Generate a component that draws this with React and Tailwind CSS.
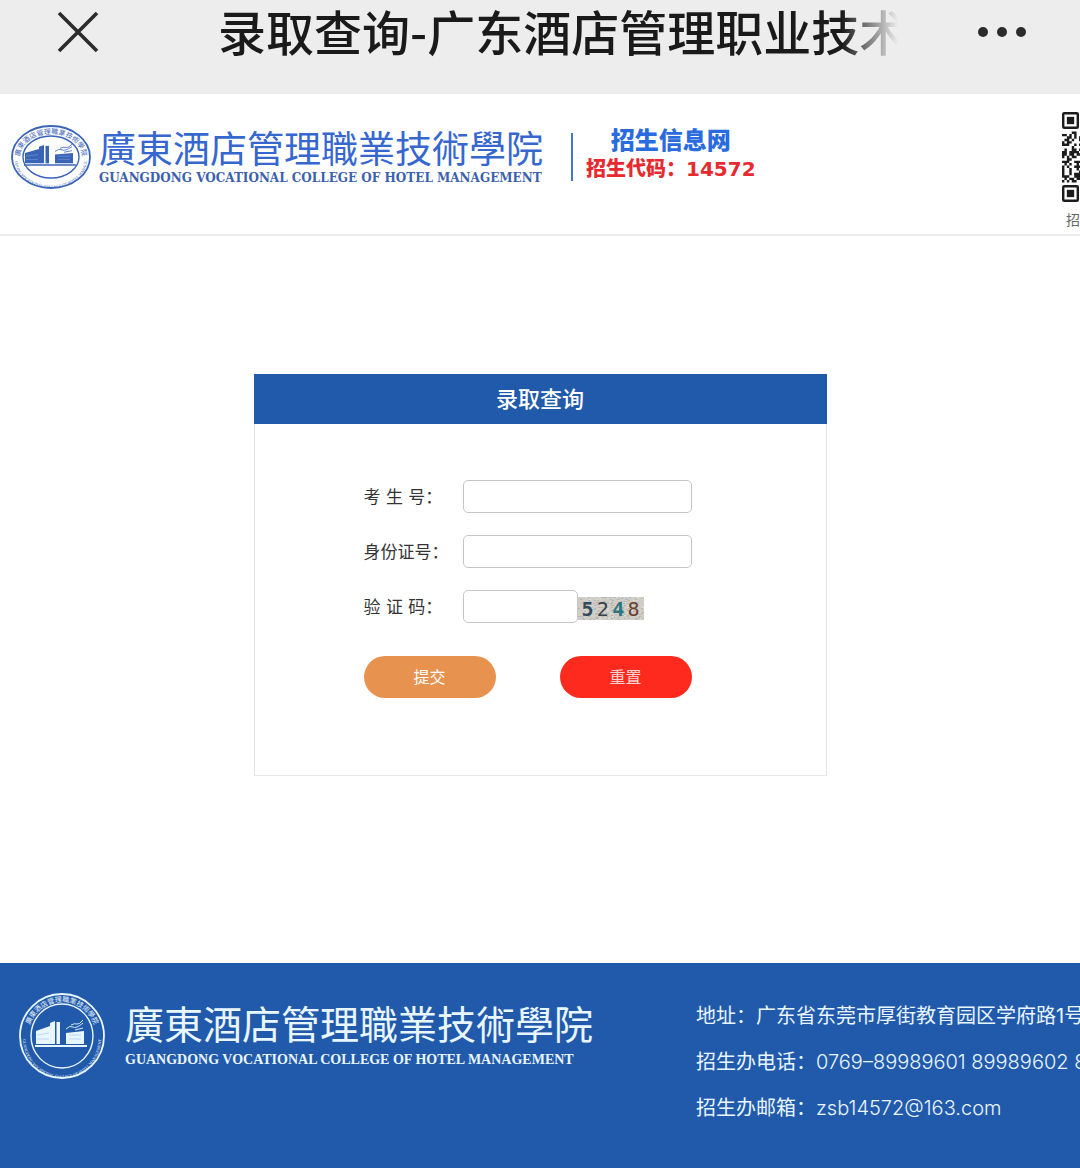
import React, { useState } from 'react';

const SCHOOL_CN = '廣東酒店管理職業技術學院';
const SCHOOL_EN = 'GUANGDONG VOCATIONAL COLLEGE OF HOTEL MANAGEMENT';

// Round school seal, drawn around its own centre
const Emblem = ({ id, rx, ry, className }) => {
  const tx = rx - 8;
  const ty = ry - 8;
  const bx = rx - 3;
  const by = ry - 3;
  return (
    <svg
      className={className}
      width={rx * 2 + 2}
      height={ry * 2 + 2}
      viewBox={`${-rx - 1} ${-ry - 1} ${rx * 2 + 2} ${ry * 2 + 2}`}
      fill="none"
      stroke="currentColor"
      aria-hidden="true"
    >
      <ellipse rx={rx} ry={ry} strokeWidth="1.8" />
      <ellipse rx={rx - 11} ry={ry - 10} strokeWidth="1.4" />
      <path id={`${id}-top`} d={`M${-tx} 0A${tx} ${ty} 0 0 1 ${tx} 0`} stroke="none" />
      <path id={`${id}-bottom`} d={`M${-bx} 3A${bx} ${by} 0 0 0 ${bx} 3`} stroke="none" />
      <g fill="currentColor" stroke="none" textAnchor="middle">
        <text fontSize="7" fontFamily="'Noto Sans CJK TC', sans-serif">
          <textPath href={`#${id}-top`} startOffset="50%">{SCHOOL_CN}</textPath>
        </text>
        <text fontSize="4" fontFamily="'Liberation Serif', serif">
          <textPath href={`#${id}-bottom`} startOffset="50%">{SCHOOL_EN}</textPath>
        </text>
      </g>
      <g transform={`scale(1 ${ry / rx})`}>
        <path d="M-26-5L-12-10V-13L-7-15V8H-26Z" fill="currentColor" stroke="none" />
        <path d="M-5.500-14H-2V8H-5.500Z" fill="currentColor" stroke="none" />
        <path d="M4-3L22-5V8H4Z" fill="currentColor" stroke="none" />
        <path d="M-27 10H25" strokeWidth="2" />
        <path d="M4-7q4-4 7-2t10-4M9-11q4-2 6-1t6-4M13-6l8-2" strokeWidth="0.9" />
        <path d="M-25-1l12-2M-25 3h12M7-1h12M7 3h12" strokeWidth="0.8" className="opacity-60" stroke="#8fb0e0" />
      </g>
    </svg>
  );
};

const SIZE = 37;

const inFinder = (x, y) =>
  (x < 8 && y < 8) || (x > SIZE - 9 && y < 8) || (x < 8 && y > SIZE - 9);

const qrPath = () => {
  let d = '';
  let seed = 14572;
  for (let y = 0; y < SIZE; y++) {
    for (let x = 0; x < SIZE; x++) {
      seed = (seed * 16807) % 2147483647;
      if (!inFinder(x, y) && seed / 2147483647 > 0.48) d += `M${x} ${y}h1v1h-1z`;
    }
  }
  return d;
};

const Finder = ({ x, y }) => (
  <g transform={`translate(${x} ${y})`}>
    <rect x="0.5" y="0.5" width="6" height="6" rx="0.4" fill="none" stroke="#1c1c1c" />
    <rect x="2" y="2" width="3" height="3" />
  </g>
);

const QrCode = () => (
  <svg width="90" height="90" viewBox={`0 0 ${SIZE} ${SIZE}`} fill="#1c1c1c" aria-hidden="true">
    <path d={qrPath()} />
    <Finder x={0} y={0} />
    <Finder x={SIZE - 7} y={0} />
    <Finder x={0} y={SIZE - 7} />
  </svg>
);

const NOISE_COLORS = ['#b9b4a8', '#a9bcc0', '#d8d3ca', '#c5b3aa', '#b0bfbf', '#e0dfd8'];

const Captcha = () => {
  const dots = [];
  let seed = 5248;
  for (let i = 0; i < 260; i++) {
    seed = (seed * 16807) % 2147483647;
    const x = seed % 66;
    const y = Math.floor(seed / 66) % 23;
    dots.push(<rect key={i} x={x} y={y} width="2" height="1" fill={NOISE_COLORS[i % 6]} />);
  }
  return (
    <div className="relative mb-[3px] h-[23px] w-[66px] self-end overflow-hidden bg-[#cfcdc6]">
      <svg className="absolute inset-0" width="66" height="23" aria-hidden="true">{dots}</svg>
      <div className="relative flex h-full items-center justify-between px-1 font-['DejaVu_Sans_Mono',monospace] text-xl leading-none">
        <span className="font-bold text-[#34495e]">5</span>
        <span className="text-[#3a404c]">2</span>
        <span className="font-bold text-[#2f7580]">4</span>
        <span className="text-[#6b4135]">8</span>
      </div>
    </div>
  );
};

const inputClass = 'h-[33px] rounded-[5px] border border-[#c6c6c6] bg-white px-2 text-base outline-none focus:border-[#225aab]';

const Field = ({ id, label, value, onChange, short, children }) => (
  <div className="flex items-center">
    <label
      htmlFor={id}
      className="w-[99px] shrink-0 font-['DejaVu_Sans','Noto_Sans_CJK_SC',sans-serif] text-[17px] leading-6 whitespace-nowrap text-[#333]"
    >
      {label}
    </label>
    <input
      id={id}
      name={id}
      type="text"
      value={value}
      onChange={onChange}
      className={`${inputClass} ${short ? 'w-[115px]' : 'w-[229px]'}`}
    />
    {children}
  </div>
);

const emptyForm = { examNo: '', idCard: '', code: '' };

const App = () => {
  const [form, setForm] = useState(emptyForm);

  const handleChange = (e) => {
    setForm({ ...form, [e.target.name]: e.target.value });
  };

  return (
    <div className="min-h-screen overflow-hidden bg-white font-['Inter','Noto_Sans_CJK_SC',sans-serif]">
      {/* Browser bar */}
      <div className="flex h-[94px] items-center bg-[#ededed] pr-[52px] pb-[30px] pl-14 text-[#1a1a1a]">
        <button type="button" aria-label="关闭" className="shrink-0">
          <svg width="44" height="44" viewBox="0 0 44 44" fill="none" stroke="#2b2b2b" strokeWidth="3.600">
            <path d="M3 3L41 41M41 3L3 41" />
          </svg>
        </button>
        <div className="mr-[78px] ml-[118px] flex-1 overflow-hidden pb-1 font-['Noto_Sans_CJK_SC',sans-serif] text-5xl leading-[60px] font-medium whitespace-nowrap [mask-image:linear-gradient(to_right,#000_calc(100%-56px),transparent)]">
          录取查询-广东酒店管理职业技术
        </div>
        <button type="button" aria-label="更多" className="shrink-0">
          <svg width="52" height="12" viewBox="0 0 52 12" fill="#2b2b2b">
            <circle cx="7" cy="6" r="5" />
            <circle cx="26" cy="6" r="5" />
            <circle cx="45" cy="6" r="5" />
          </svg>
        </button>
      </div>

      {/* Site header */}
      <header className="flex items-start justify-between border-b-2 border-[#ececec] pt-[18px] pb-1 pl-[11px] whitespace-nowrap">
        <div className="flex h-[90px] shrink-0 items-center">
          <Emblem id="head" rx={39} ry={31} className="shrink-0 text-[#3a64b8]" />
          <div className="ml-2">
            <div className="font-['Noto_Sans_CJK_TC',sans-serif] text-[37px] leading-[42px] text-[#3667cf]">{SCHOOL_CN}</div>
            <div className="font-['DejaVu_Serif',serif] text-xs leading-5 font-bold text-[#3c5fae]">{SCHOOL_EN}</div>
          </div>
          <div className="ml-7 h-12 w-[2px] bg-[#4279c4]"></div>
          <div className="ml-[13px] pb-[6px] text-center font-black">
            <div className="font-['Noto_Sans_CJK_SC',sans-serif] text-2xl leading-7 text-[#2a6be0]">招生信息网</div>
            <div className="mt-[2px] font-['DejaVu_Sans','Noto_Sans_CJK_SC',sans-serif] text-xl leading-7 text-[#e62a30]">招生代码：14572</div>
          </div>
        </div>
        <div className="-mr-[72px] w-[90px] shrink-0">
          <QrCode />
          <div className="mt-2 pl-1 text-sm leading-5 text-[#666]">招</div>
        </div>
      </header>

      {/* Query form */}
      <main className="px-4 pt-[138px] pb-[187px]">
        <section className="mx-auto max-w-[573px]">
          <h1 className="bg-[#225aab] text-center text-[22px] leading-[50px] font-medium text-white">录取查询</h1>
          <form
            onSubmit={(e) => e.preventDefault()}
            className="border border-t-0 border-[#e6e6e6] pt-14 pb-[77px] pl-[109px]"
          >
            <div className="flex flex-col gap-[22px]">
              <Field id="examNo" label="考 生 号：" value={form.examNo} onChange={handleChange} />
              <Field id="idCard" label="身份证号：" value={form.idCard} onChange={handleChange} />
              <Field id="code" label="验 证 码：" value={form.code} onChange={handleChange} short>
                <Captcha />
              </Field>
            </div>
            <div className="mt-[33px] flex gap-16">
              <button type="submit" className="h-[42px] w-[132px] rounded-full bg-[#e8924f] text-base text-white">
                提交
              </button>
              <button
                type="button"
                onClick={() => setForm(emptyForm)}
                className="h-[42px] w-[132px] rounded-full bg-[#ff2a1e] text-base text-white/80"
              >
                重置
              </button>
            </div>
          </form>
        </section>
      </main>

      {/* Footer */}
      <footer className="flex items-start bg-[#225aab] pt-[30px] pb-[37px] pl-[19px] whitespace-nowrap text-[#e8f6ff]">
        <div className="flex w-[677px] shrink-0 items-center">
          <Emblem id="foot" rx={42} ry={42} className="shrink-0" />
          <div className="ml-5">
            <div className="font-['Noto_Sans_CJK_TC',sans-serif] text-[39px] leading-[48px]">{SCHOOL_CN}</div>
            <div className="font-['Liberation_Serif',serif] text-sm leading-7 font-bold">{SCHOOL_EN}</div>
          </div>
        </div>
        <div className="shrink-0 text-xl leading-[46px]">
          <p>地址：广东省东莞市厚街教育园区学府路1号</p>
          <p>
            招生办电话：<span className="font-light">0769–89989601 89989602 8</span>
          </p>
          <p>
            招生办邮箱：<a href="mailto:zsb14572@163.com" className="font-light">zsb14572@163.com</a>
          </p>
        </div>
      </footer>
    </div>
  );
};

export default App;
